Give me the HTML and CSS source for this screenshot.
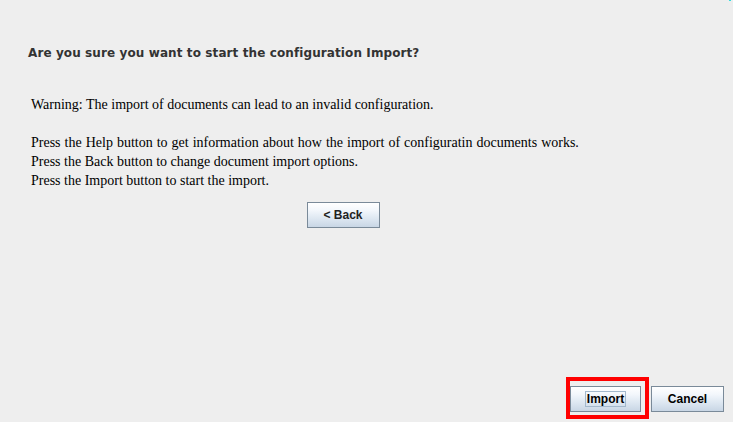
FILE: index.html
```html
<!DOCTYPE html>
<html>
<head>
<meta charset="utf-8">
<link rel="stylesheet" href="styles.css">
</head>
<body>
<div class="dialog">
  <div class="corner"></div>
  <h1 class="title">Are you sure you want to start the configuration Import?</h1>
  <div class="message">
    <p class="line">Warning: The import of documents can lead to an invalid configuration.</p>
    <p class="line gap">Press the Help button to get information about how the import of configuratin documents works.</p>
    <p class="line">Press the Back button to change document import options.</p>
    <p class="line">Press the Import button to start the import.</p>
  </div>
  <div class="back-row">
    <button class="btn back">&lt; Back</button>
  </div>
  <div class="spacer"></div>
  <div class="footer">
    <div class="highlight">
      <button class="btn import"><span class="focus">Import</span></button>
    </div>
    <button class="btn cancel">Cancel</button>
  </div>
</div>
</body>
</html>
```
FILE: styles.css
```css
html, body {
  margin: 0;
  padding: 0;
  background: #eeeeee;
}
.dialog {
  width: 733px;
  height: 422px;
  display: flex;
  flex-direction: column;
  position: relative;
  box-sizing: border-box;
}
.corner {
  position: absolute;
  top: 0;
  right: 2px;
  width: 2px;
  height: 1px;
  background: #33dddd;
}
.title {
  margin: 45px 0 0 28px;
  font-family: "DejaVu Sans", sans-serif;
  font-weight: bold;
  font-size: 12px;
  letter-spacing: 0.1px;
  line-height: 16px;
  color: #333333;
}
.message {
  margin: 34px 0 0 31px;
  font-family: "Liberation Serif", serif;
  font-size: 14px;
  color: #000;
}
.line {
  margin: 0;
  line-height: 19px;
}
.gap {
  margin-top: 19px;
  word-spacing: 0.5px;
}
.back-row {
  display: flex;
  justify-content: center;
  margin-top: 12px;
  padding-right: 47px;
}
.btn {
  font-family: "Liberation Sans", Arial, sans-serif;
  font-weight: bold;
  font-size: 12px;
  color: #222;
  background: linear-gradient(#ffffff 0%, #f3f7fc 30%, #dde7f1 65%, #c8d6e5 100%);
  border: 1px solid #7a8a99;
  border-radius: 0;
  padding: 0;
  height: 26px;
  display: flex;
  align-items: center;
  justify-content: center;
  box-sizing: border-box;
}
.back {
  width: 73px;
}
.spacer {
  flex: 1;
}
.footer {
  display: flex;
  justify-content: flex-end;
  align-items: flex-end;
  gap: 2px;
  padding: 0 9px 3px 0;
}
.highlight {
  border: 4px solid #ff0000;
  padding: 5px 4px 3px 0;
}
.import {
  width: 71px;
  color: #000;
}
.focus {
  border: 1px solid #a3b8cc;
  padding: 0 1px;
  line-height: 14px;
}
.cancel {
  width: 73px;
  color: #000;
  margin-bottom: 7px;
}
```
